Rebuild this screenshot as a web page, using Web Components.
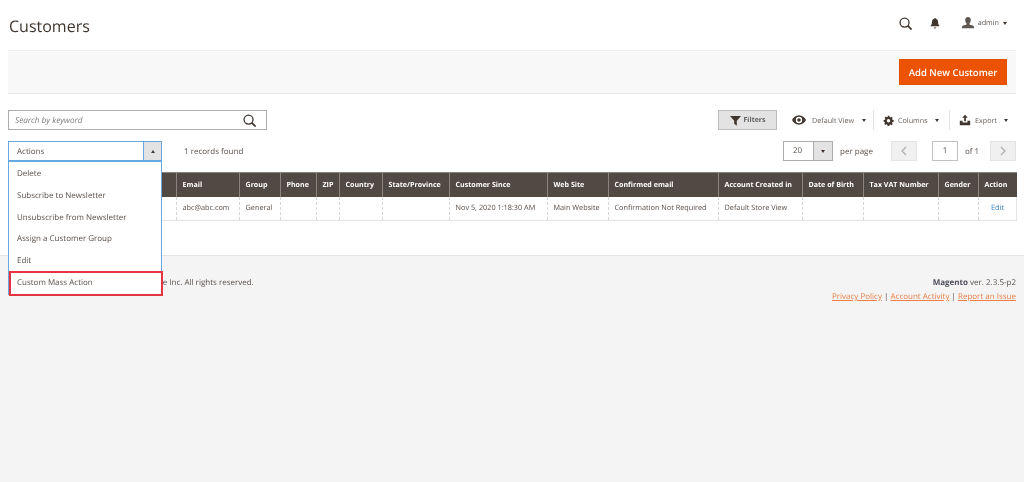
<!DOCTYPE html>
<html lang="en">
<head>
<meta charset="utf-8">
<title>Customers</title>
<style>
  html, body { margin: 0; height: 100%; background: #fff; }
  body { font-family: "Open Sans", sans-serif; color: #41362f; display: flex; flex-direction: column; height: 482px; overflow: hidden; text-rendering: geometricPrecision; filter: blur(0.3px); }
  admin-footer { flex: 1; }
</style>
</head>
<body>
<admin-header title="Customers"></admin-header>
<page-actions><action-button>Add New Customer</action-button></page-actions>
<grid-toolbar></grid-toolbar>
<grid-pager></grid-pager>
<customer-grid></customer-grid>
<admin-footer></admin-footer>

<script>
const ICONS = {
  search: '<circle cx="6.4" cy="6.4" r="5.200" fill="none" stroke="currentColor" stroke-width="1.500"/><path d="M10 10 14.500 14.500" stroke="currentColor" stroke-width="1.900" fill="none"/>',
  bell: '<path d="M7.500 1.200c.7 0 1 .4 1.100 1 1.900.5 2.700 2 2.700 4 0 2.200.6 3.500 1.700 4.600v.9H2v-.9c1.100-1.100 1.700-2.400 1.700-4.600 0-2 .8-3.500 2.700-4 .1-.6.4-1 1.100-1zM6 13h3c0 .9-.6 1.500-1.500 1.500S6 13.900 6 13z" fill="currentColor"/>',
  user: '<path d="M7.500 1c1.900 0 3 1.400 3 3.300 0 1.500-.6 2.800-1.400 3.500v1.300c1.700.6 4.400 1 4.900 2.400v1.500H1v-1.500c.5-1.400 3.200-1.800 4.900-2.400V7.800C5.100 7.100 4.500 5.800 4.500 4.300 4.500 2.400 5.600 1 7.500 1z" fill="currentColor"/>',
  filter: '<path d="M0 1.500h15L9.300 8v6.500L5.700 12V8z" fill="currentColor"/>',
  eye: '<path d="M7.500 2.500C11 2.500 13.800 5 15 7.500c-1.200 2.500-4 5-7.500 5S1.200 10 0 7.500C1.200 5 4 2.500 7.500 2.500zm0 1.600a3.400 3.400 0 1 0 0 6.800 3.400 3.400 0 0 0 0-6.800zm0 1.500a1.900 1.900 0 1 1 0 3.800 1.900 1.900 0 0 1 0-3.800z" fill="currentColor" fill-rule="evenodd"/>',
  gear: '<path d="M6.300 1h2.400l.3 1.800 1.100.5 1.500-1 1.700 1.700-1 1.500.5 1.100 1.800.3v2.400l-1.800.3-.5 1.100 1 1.500-1.700 1.700-1.500-1-1.100.5-.3 1.800H6.300L6 13.200l-1.100-.5-1.500 1-1.700-1.700 1-1.500-.5-1.100L.9 9.100V6.700l1.800-.3.5-1.100-1-1.500L3.900 2.100l1.500 1 1.100-.5zM7.500 5.600a2.300 2.300 0 1 0 0 4.600 2.300 2.300 0 0 0 0-4.600z" fill="currentColor" fill-rule="evenodd"/>',
  export: '<path d="M7.500 1 11 4.800H8.600V9H6.400V4.800H4zM1 8.500h3.500v2h6v-2H14V14H1z" fill="currentColor"/>'
};

class BaseElement extends HTMLElement {
  render(html) {
    this.attachShadow({ mode: "open" }).innerHTML = html;
  }
}

function icon(name, size) {
  return `<svg width="${size}" height="${size}" viewBox="0 0 15 15" aria-hidden="true">${ICONS[name]}</svg>`;
}

customElements.define("admin-header", class extends BaseElement {
  connectedCallback() {
    this.render(`
      <style>
        :host { display: flex; align-items: center; height: 50px; padding: 0 17px 0 9px; flex: none; }
        h1 { flex: 1; margin: 2px 0 0; font: 400 16px/24px "Open Sans", sans-serif; color: #41362f; }
        .tools { display: flex; align-items: center; color: #41362f; margin-top: -4px; }
        .search { margin-right: 17.500px; display: flex; }
        .bell { margin-right: 19.500px; display: flex; }
        .user { display: flex; align-items: center; gap: 3px; font-size: 7.200px; color: #5c5550; }
        .caret { width: 0; height: 0; border: 2.500px solid transparent; border-top: 3px solid #41362f; border-bottom: 0; margin-left: 1px; }
      </style>
      <h1>${this.getAttribute("title")}</h1>
      <div class="tools">
        <span class="search">${icon("search", 13)}</span>
        <span class="bell">${icon("bell", 12)}</span>
        <span class="user">${icon("user", 14)}<span>admin</span><i class="caret"></i></span>
      </div>`);
  }
});

customElements.define("page-actions", class extends BaseElement {
  connectedCallback() {
    this.render(`
      <style>
        :host { display: flex; justify-content: flex-end; align-items: center; flex: none; box-sizing: border-box;
          height: 44px; margin: 0 8px; padding: 0 9px 0 0; background: #f8f8f8;
          border-top: 1px solid #eeeeee; border-bottom: 1px solid #e6e6e6; }
      </style>
      <slot></slot>`);
  }
});

customElements.define("action-button", class extends BaseElement {
  connectedCallback() {
    this.render(`
      <style>
        :host { display: flex; align-items: center; justify-content: center; box-sizing: border-box; width: 108px; height: 26px;
          background: #eb5202; border: 1px solid #e04f02; color: #fff; font: 600 9.500px "Open Sans", sans-serif; white-space: nowrap; }
      </style>
      <slot></slot>`);
  }
});

customElements.define("grid-toolbar", class extends BaseElement {
  connectedCallback() {
    this.render(`
      <style>
        :host { display: flex; align-items: center; flex: none; height: 20px; margin: 16px 8px 0; font-size: 7.200px; color: #6b625c; }
        .search { box-sizing: border-box; width: 259px; height: 20px; display: flex; align-items: center; justify-content: space-between;
          padding: 0 10px 0 6px; border: 1px solid #adadad; background: #fff; }
        .search em { font-size: 8.200px; color: #7b7b7b; padding-top: 1px; }
        .search span { display: flex; color: #41362f; }
        .filters { box-sizing: border-box; margin-left: auto; width: 59px; height: 20px; display: flex; align-items: center; justify-content: center; gap: 3px;
          background: #e3e3e3; border: 1px solid #bdbdbd; font-size: 7px; font-weight: 700; color: #5f5f5f; }
        .filters span { padding-top: 1px; }
        .filters svg { color: #41362f; }
        .switch { display: flex; align-items: center; height: 20px; box-sizing: border-box; }
        .switch span { padding-top: 1px; }
        .switch svg { color: #41362f; }
        .caret { width: 0; height: 0; border: 2.500px solid transparent; border-top: 3px solid #41362f; border-bottom: 0; }
        .view { width: 97px; padding-left: 15px; gap: 6px; border-right: 1px solid #e3e3e3; }
        .view .caret { margin-left: 2px; }
        .cols { width: 76px; padding-left: 9px; gap: 4px; border-right: 1px solid #e3e3e3; }
        .cols .caret { margin-left: 3px; }
        .exp { padding-left: 9px; gap: 4px; width: 66px; }
        .exp .caret { margin-left: 3px; }
      </style>
      <div class="search"><em>Search by keyword</em><span>${icon("search", 13)}</span></div>
      <div class="filters">${icon("filter", 11)}<span>Filters</span></div>
      <div class="switch view">${icon("eye", 14)}<span>Default View</span><i class="caret"></i></div>
      <div class="switch cols">${icon("gear", 11)}<span>Columns</span><i class="caret"></i></div>
      <div class="switch exp">${icon("export", 12)}<span>Export</span><i class="caret"></i></div>`);
  }
});

customElements.define("mass-actions", class extends BaseElement {
  connectedCallback() {
    const items = ["Delete", "Subscribe to Newsletter", "Unsubscribe from Newsletter", "Assign a Customer Group", "Edit", "Custom Mass Action"];
    this.render(`
      <style>
        :host { display: block; position: relative; box-sizing: border-box; width: 154px; height: 20px; font-size: 8px; color: #41362f; }
        .select { display: flex; height: 20px; box-sizing: border-box; border: 1px solid #68a8e0; background: #fff; }
        .select span { flex: 1; padding-left: 8px; line-height: 19px; color: #5a504a; }
        .select b { width: 17px; border-left: 1px solid #68a8e0; background: #e3e3e3; display: flex; align-items: center; justify-content: center; }
        .select i { width: 0; height: 0; border: 2.500px solid transparent; border-bottom: 3px solid #41362f; border-top: 0; }
        ul { position: absolute; top: 20px; left: 0; right: 0; margin: 0; padding: 1px 0 0; list-style: none; background: #fff;
          border: 1px solid #68a8e0; box-sizing: border-box; z-index: 2; }
        li { height: 21.800px; line-height: 21.800px; padding-left: 8px; color: #5a504a; white-space: nowrap; }
        li.marked { position: relative; }
        li.marked::after { content: ""; position: absolute; left: 0; right: -2px; top: -1px; bottom: -2px; border: 2.500px solid #e53340; }
      </style>
      <div class="select"><span>Actions</span><b><i></i></b></div>
      <ul>${items.map((item, index) => `<li class="${index === items.length - 1 ? "marked" : ""}">${item}</li>`).join("")}</ul>`);
  }
});

customElements.define("grid-pager", class extends BaseElement {
  connectedCallback() {
    this.render(`
      <style>
        :host { display: flex; align-items: center; flex: none; height: 20px; margin: 11px 8px 0; font-size: 8px; color: #5a504a; position: relative; z-index: 2; }
        .found { margin-left: 22px; }
        .pager { margin-left: auto; display: flex; align-items: center; }
        .size { box-sizing: border-box; width: 50px; height: 20px; display: flex; border: 1px solid #adadad; background: #fff; }
        .size span { flex: 1; padding-left: 9px; line-height: 18px; }
        .size b { width: 18px; background: #e3e3e3; border-left: 1px solid #adadad; display: flex; align-items: center; justify-content: center; }
        .size i { width: 0; height: 0; border: 2.500px solid transparent; border-top: 3px solid #41362f; border-bottom: 0; }
        .per { margin-left: 7px; width: 36px; white-space: nowrap; }
        .nav { box-sizing: border-box; width: 26px; height: 20px; background: #f0f0f0; border: 1px solid #e3e3e3; color: #b0aca9; display: flex; align-items: center; justify-content: center; }
        .page { box-sizing: border-box; width: 26px; height: 20px; margin-left: 15px; border: 1px solid #c2c2c2; background: #fff; text-align: center; line-height: 18px; }
        .of { width: 14px; margin: 0 11px 0 7px; white-space: nowrap; }
        svg { display: block; }
      </style>
      <mass-actions></mass-actions>
      <span class="found">1 records found</span>
      <div class="pager">
        <div class="size"><span>20</span><b><i></i></b></div>
        <span class="per">per page</span>
        <div class="nav" style="margin-left: 15px"><svg width="6" height="10" viewBox="0 0 6 10"><path d="M5 1 1 5l4 4" fill="none" stroke="currentColor" stroke-width="1.200"/></svg></div>
        <div class="page">1</div>
        <span class="of">of 1</span>
        <div class="nav"><svg width="6" height="10" viewBox="0 0 6 10"><path d="M1 1l4 4-4 4" fill="none" stroke="currentColor" stroke-width="1.200"/></svg></div>
      </div>`);
  }
});

customElements.define("customer-grid", class extends BaseElement {
  connectedCallback() {
    const columns = [
      ["", 38], ["ID", 67], ["Name", 63], ["Email", 63], ["Group", 41], ["Phone", 36], ["ZIP", 23], ["Country", 43], ["State/Province", 67],
      ["Customer Since", 98], ["Web Site", 61], ["Confirmed email", 110], ["Account Created in", 84], ["Date of Birth", 61],
      ["Tax VAT Number", 75], ["Gender", 40], ["Action", 38]
    ];
    const row = ["", "1", "abc abc test", "abc@abc.com", "General", "", "", "", "", "Nov 5, 2020 1:18:30 AM", "Main Website",
      "Confirmation Not Required", "Default Store View", "", "", "", "Edit"];
    this.render(`
      <style>
        :host { display: block; flex: none; margin: 11px 8px 0; }
        table { border-collapse: collapse; table-layout: fixed; width: 1008px; font-size: 7.300px; }
        th { height: 24px; padding: 0 0 0 5.500px; box-sizing: border-box; text-align: left; background: #514943; color: #fff; font-size: 7.100px; font-weight: 700;
          border-left: 1px solid #8a837e; border-top: 1px solid #8a837e; white-space: nowrap; }
        th:first-child { border-left: 0; }
        td { height: 24px; padding: 0 0 0 5.500px; box-sizing: border-box; color: #5a504a; border-left: 1px dashed #d6d6d6; border-bottom: 1px solid #e3e3e3; white-space: nowrap; overflow: hidden; }
        td:last-child { border-right: 1px solid #e3e3e3; text-align: center; padding: 0; }
        td:last-child span { color: #2f7ec2; }
      </style>
      <table>
        <colgroup>${columns.map(([, width]) => `<col style="width:${width}px">`).join("")}</colgroup>
        <thead><tr>${columns.map(([name]) => `<th>${name}</th>`).join("")}</tr></thead>
        <tbody><tr>${row.map((cell, index) => `<td>${index === row.length - 1 ? `<span>${cell}</span>` : cell}</td>`).join("")}</tr></tbody>
      </table>`);
  }
});

customElements.define("admin-footer", class extends BaseElement {
  connectedCallback() {
    this.render(`
      <style>
        :host { display: flex; justify-content: space-between; margin-top: 34px; padding: 20px 8px 0; background: #f4f4f4;
          border-top: 1px solid #e3e3e3; font-size: 8px; line-height: 14px; color: #5a504a; }
        .left { margin-left: 16px; }
        .right { text-align: right; }
        b { color: #4d4d5c; }
        a { color: #eb7f45; text-decoration: underline; }
      </style>
      <div class="left">Copyright © 2020 Magento Commerce Inc. All rights reserved.</div>
      <div class="right">
        <div><b>Magento</b> ver. 2.3.5-p2</div>
        <div><a>Privacy Policy</a> | <a>Account Activity</a> | <a>Report an Issue</a></div>
      </div>`);
  }
});
</script>
</body>
</html>
